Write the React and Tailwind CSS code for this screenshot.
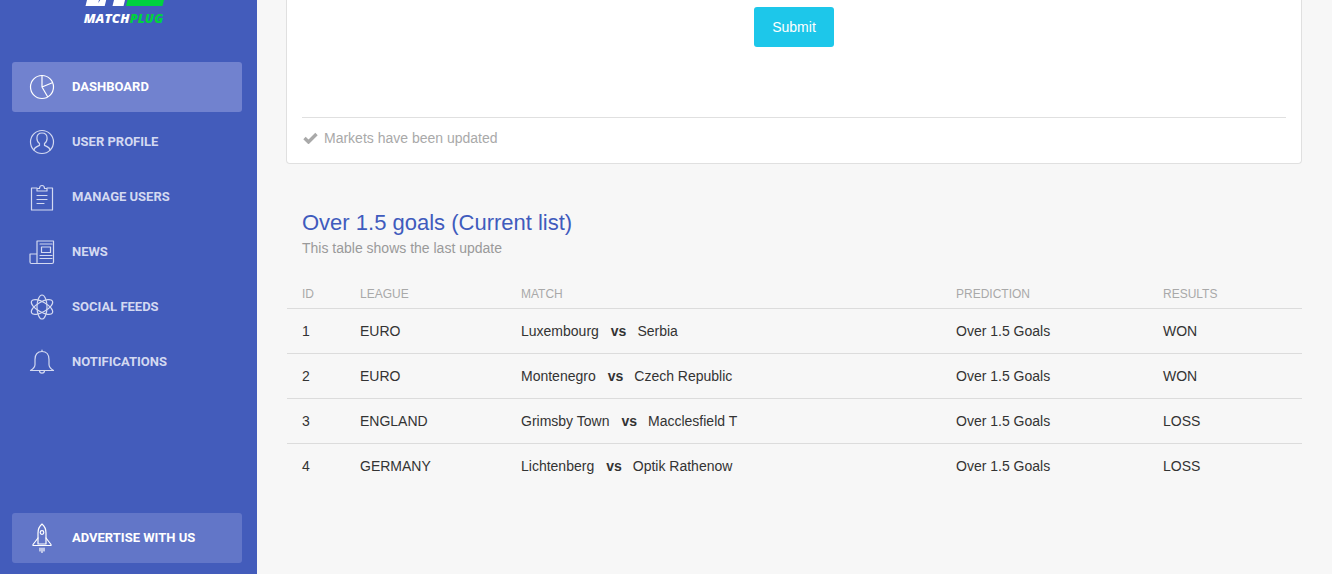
const Ic = ({ children, w = 26, h = 26, vb = "0 0 26 26", cls = "" }) => (
  <svg width={w} height={h} viewBox={vb} fill="none" stroke="currentColor" strokeWidth="1.2" strokeLinecap="round" strokeLinejoin="round" className={cls}>{children}</svg>
);
const Pie = () => (<Ic><circle cx="13" cy="13" r="11.500" /><path d="M13 1.500V13l10.300-4.300M13 13l5.500 9.500" /></Ic>);
const User = () => (<Ic><circle cx="13" cy="13" r="11.500" /><path d="M4.800 21c.6-2.800 3-3.400 5.700-4.600v-2c-1.500-1-2.600-2.600-2.600-5.200 0-3 2-5.200 5.100-5.200s5.100 2.200 5.100 5.200c0 2.600-1.100 4.200-2.600 5.200v2c2.700 1.200 5.100 1.800 5.700 4.600" /></Ic>);
const Clip = () => (<Ic h={28} vb="0 0 26 28"><path d="M8 5H2.500V27h21V5H18" /><path d="M8 8V5.500h2.500c0-4 5-4 5 0H18V8z" /><path d="M8 12.500h10M8 16.500h10M8 20.500h7" /></Ic>);
const News = () => (<Ic h={25} vb="0 0 26 25"><path d="M8 1h16.500v21a1.500 1.500 0 0 1-1.500 1.500H2.500A1.500 1.500 0 0 1 1 22v-8h7v8.500M8 14V1" /><rect x="12.500" y="7" width="9" height="5.500" /><path d="M11 4h12M11 15.500h12M11 18.500h12" /></Ic>);
const Atom = () => (<Ic><ellipse cx="13" cy="13" rx="5" ry="12" /><ellipse cx="13" cy="13" rx="5" ry="12" transform="rotate(60 13 13)" /><ellipse cx="13" cy="13" rx="5" ry="12" transform="rotate(120 13 13)" /></Ic>);
const Bell = () => (<Ic><path d="M13 2.500c-4.500 0-7 3-7 8v5c0 2.500-2 4.500-4.500 6h23c-2.500-1.500-4.500-3.500-4.500-6v-5c0-5-2.500-8-7-8z" /><path d="M13 1v1.500M10.500 21.500c0 3.500 5 3.500 5 0" /></Ic>);
const Rocket = () => (<Ic w={20} h={30} vb="0 0 20 30"><path d="M10 1c-3 2.500-4 5.500-4 9v11h8V10c0-3.500-1-6.500-4-9z" /><circle cx="10" cy="9.500" r="1.800" /><path d="M6 15l-5 6.500v1h18v-1L14 15" /><path d="M8 25v3M10 25v4.500M12 25v3" /></Ic>);

const nav = [
  { label: "DASHBOARD", Icon: Pie, active: true },
  { label: "USER PROFILE", Icon: User },
  { label: "MANAGE USERS", Icon: Clip },
  { label: "NEWS", Icon: News },
  { label: "SOCIAL FEEDS", Icon: Atom },
  { label: "NOTIFICATIONS", Icon: Bell },
];
const rows = [
  ["1", "EURO", "Luxembourg", "Serbia", "Over 1.5 Goals", "WON"],
  ["2", "EURO", "Montenegro", "Czech Republic", "Over 1.5 Goals", "WON"],
  ["3", "ENGLAND", "Grimsby Town", "Macclesfield T", "Over 1.5 Goals", "LOSS"],
  ["4", "GERMANY", "Lichtenberg", "Optik Rathenow", "Over 1.5 Goals", "LOSS"],
];
const cols = "ml-px grid grid-cols-[58px_161px_435px_207px_1fr] pl-[15px]";

export default function App() {
  return (
    <div className="flex h-[574px] w-[1332px] overflow-hidden bg-[#f7f7f7] font-['Liberation_Sans',Arial,sans-serif]">
      <aside className="flex w-[257px] shrink-0 flex-col bg-[#435cbb] pl-3 pr-[15px]">
        <div className="flex h-[62px] flex-col items-center pr-[7px]">
          <svg width="80" height="6" viewBox="0 0 80 6" className="block">
            <path d="M3 0h12l-.800 3 2-3h6l-1.500 6H1.500z" fill="#fff" />
            <path d="M30 0h11l-1.500 6H28.500z" fill="#fff" />
            <path d="M43.500 0h36.500l-1.500 6H42z" fill="#00d13f" />
          </svg>
          <div className="mt-[5px] whitespace-nowrap font-['Open_Sans',sans-serif] text-[13px] font-extrabold italic leading-[14px] tracking-[0.15px] text-white">
            MATCH<span className="text-[#00d13f]">PLUG</span>
          </div>
        </div>
        <nav className="flex flex-col gap-[5px]">
          {nav.map(({ label, Icon, active }) => (
            <div key={label} className={`flex h-[50px] items-center gap-[17px] rounded-[3px] pl-[17px] ${active ? "bg-[#7182cf] text-white" : "text-[#d3d9f1]"}`}>
              <span className="flex w-[26px] justify-center"><Icon /></span>
              <span className="mb-[2px] font-['Roboto',sans-serif] text-[13px] font-bold leading-none">{label}</span>
            </div>
          ))}
        </nav>
        <div className="mt-auto mb-[11px] flex h-[50px] items-center gap-[17px] rounded-[3px] bg-[#6276c8] pl-[17px] text-white">
          <span className="flex w-[26px] justify-center"><Rocket /></span>
          <span className="mb-[2px] font-['Roboto',sans-serif] text-[13px] font-bold leading-none">ADVERTISE WITH US</span>
        </div>
      </aside>
      <main className="min-w-0 flex-1 pl-[29px] pr-[30px]">
        <section className="flex h-[164px] flex-col rounded-b-[4px] border border-t-0 border-[#e0e0e0] bg-white px-[15px]">
          <div className="flex justify-center pt-[7px]">
            <button className="h-10 w-20 rounded-[3px] bg-[#1dc7ea] text-sm text-white">Submit</button>
          </div>
          <div className="mt-[70px] flex items-center gap-[6px] border-t border-[#e0e0e0] pt-[10px] text-sm leading-5 text-[#a9a9a9]">
            <svg width="15" height="12" viewBox="0 0 15 12" className="ml-[1px]"><path d="M1.500 6 5.500 10 13.500 2" fill="none" stroke="#a9a9a9" strokeWidth="3.400" /></svg>
            <span>Markets have been updated</span>
          </div>
        </section>
        <section className="pt-[44px]">
          <h2 className="pl-4 text-[22px] leading-[29px] text-[#3f5bbd]">Over 1.5 goals (Current list)</h2>
          <p className="pl-4 pt-px text-sm leading-5 text-[#9a9a9a]">This table shows the last update</p>
          <div className={`${cols} mt-5 h-[31px] items-center border-b border-[#dcdcdc] pt-[2px] text-xs text-[#a9a9a9]`}>
            <span>ID</span><span>LEAGUE</span><span>MATCH</span><span>PREDICTION</span><span>RESULTS</span>
          </div>
          {rows.map(([id, league, a, b, pred, res]) => (
            <div key={id} className={`${cols} h-[45px] items-center border-b border-[#dcdcdc] text-sm text-[#333] last:border-transparent`}>
              <span>{id}</span>
              <span>{league}</span>
              <span className="flex"><span>{a}</span><b className="ml-3 mr-[11px]">vs</b><span>{b}</span></span>
              <span>{pred}</span>
              <span>{res}</span>
            </div>
          ))}
        </section>
      </main>
    </div>
  );
}
